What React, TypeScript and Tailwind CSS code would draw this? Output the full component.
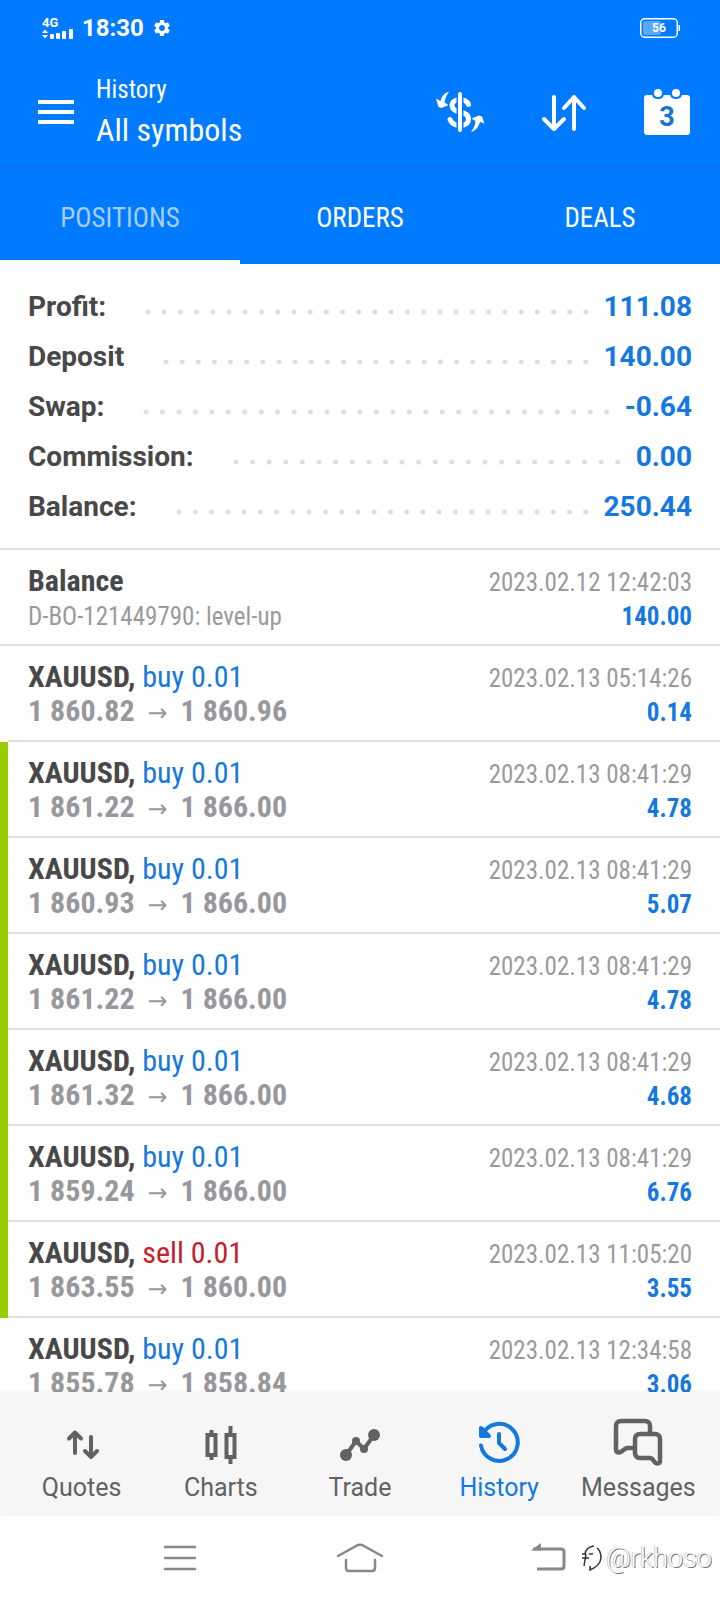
import { useState } from 'react';
import { MdSettings } from 'react-icons/md';
import clsx from 'clsx';

type Deal = {
  side: 'buy' | 'sell';
  open: string;
  close: string;
  time: string;
  profit: string;
  marked?: boolean;
};

const summary = [
  ['Profit:', '111.08'],
  ['Deposit', '140.00'],
  ['Swap:', '-0.64'],
  ['Commission:', '0.00'],
  ['Balance:', '250.44'],
];

const deals: Deal[] = [
  { side: 'buy', open: '1 860.82', close: '1 860.96', time: '2023.02.13 05:14:26', profit: '0.14' },
  { side: 'buy', open: '1 861.22', close: '1 866.00', time: '2023.02.13 08:41:29', profit: '4.78', marked: true },
  { side: 'buy', open: '1 860.93', close: '1 866.00', time: '2023.02.13 08:41:29', profit: '5.07', marked: true },
  { side: 'buy', open: '1 861.22', close: '1 866.00', time: '2023.02.13 08:41:29', profit: '4.78', marked: true },
  { side: 'buy', open: '1 861.32', close: '1 866.00', time: '2023.02.13 08:41:29', profit: '4.68', marked: true },
  { side: 'buy', open: '1 859.24', close: '1 866.00', time: '2023.02.13 08:41:29', profit: '6.76', marked: true },
  { side: 'sell', open: '1 863.55', close: '1 860.00', time: '2023.02.13 11:05:20', profit: '3.55', marked: true },
  { side: 'buy', open: '1 855.78', close: '1 858.84', time: '2023.02.13 12:34:58', profit: '3.06' },
];

const tabs = ['POSITIONS', 'ORDERS', 'DEALS'];

function SignalIcon() {
  return (
    <svg width="32" height="10" viewBox="0 0 32 10" fill="currentColor">
      <path d="M0 4L3 0.5L6 4ZM0 6L3 9.5L6 6Z" />
      <rect x="8" y="5" width="4" height="5" rx="1" />
      <rect x="14" y="4" width="4" height="6" rx="1" />
      <rect x="20" y="2" width="4" height="8" rx="1" />
      <rect x="27" y="0" width="4" height="10" rx="1" />
    </svg>
  );
}

function BatteryIcon() {
  return (
    <svg width="40" height="20" viewBox="0 0 40 20" role="img" aria-label="Battery 56%">
      <rect x="0.75" y="0.75" width="36.5" height="18.5" rx="4" fill="none" stroke="#fff" strokeWidth="1.5" />
      <rect x="3" y="3" width="18" height="14" rx="2" fill="#fff" fillOpacity="0.35" />
      <rect x="38.5" y="7" width="1.5" height="6" fill="#fff" />
      <text x="19" y="14" fill="#fff" fontSize="12" fontWeight="700" textAnchor="middle">56</text>
    </svg>
  );
}

function CurrencyIcon() {
  return (
    <svg width="50" height="46" viewBox="0 0 50 46" fill="none">
      <path
        d="M32.500 15.500C31 12 28 10.500 24 10.500C19.500 10.500 16 13 16 16.500C16 20.500 19 22 24 23C29.500 24 32.500 26 32.500 30C32.500 34 29 36.500 24 36.500C18.500 36.500 15.500 34 14 30.500"
        stroke="#fff"
        strokeWidth="5"
        strokeLinecap="round"
      />
      <path d="M24 5V41" stroke="#007aff" strokeWidth="7" />
      <path d="M24 5V41" stroke="#fff" strokeWidth="4" strokeLinecap="round" />
      <path d="M13 3C9 3.500 6 6.500 4.500 12L0 9.500L2.500 18L5.500 19L12.500 16L8.500 13.500C9 9.500 10.500 6 13 3Z" fill="#fff" />
      <path d="M35 43C39 42 42.500 38.500 44 33L48.500 34.500L46 27.500L43 26.500L35.500 29.500L39.500 32C39 36 37.500 40 35 43Z" fill="#fff" />
    </svg>
  );
}

function SortIcon() {
  return (
    <svg width="46" height="46" viewBox="0 0 46 46" fill="none" stroke="#fff" strokeWidth="4" strokeLinecap="round" strokeLinejoin="round">
      <path d="M12 8V40M2 30L12 40L22 30" />
      <path d="M32 40V8M22 19L32 8L42 19" />
    </svg>
  );
}

function CalendarIcon() {
  return (
    <svg width="46" height="46" viewBox="0 0 46 46">
      <rect y="6" width="46" height="40" rx="3" fill="#fff" />
      <rect x="8" y="-2" width="12" height="12" rx="5" fill="#007aff" />
      <rect x="26" y="-2" width="12" height="12" rx="5" fill="#007aff" />
      <circle cx="14" cy="4" r="4" fill="#fff" />
      <circle cx="32" cy="4" r="4" fill="#fff" />
      <text x="23" y="37" fill="#1a73d0" fontSize="27" fontWeight="700" textAnchor="middle">3</text>
    </svg>
  );
}

function QuotesIcon() {
  return (
    <svg width="48" height="48" viewBox="0 0 48 48" fill="none" stroke="currentColor" strokeWidth="4" strokeLinecap="round" strokeLinejoin="round">
      <path d="M17 35V15M11 20.500L17 14.500L23 20.500" />
      <path d="M33 19V39M27 33L33 39L39 33" />
    </svg>
  );
}

function ChartsIcon() {
  return (
    <svg width="48" height="48" viewBox="0 0 48 48" fill="none" stroke="currentColor" strokeWidth="4">
      <path d="M10.500 17H18.500V37H10.500ZM14.500 17V12M14.500 37V42" />
      <path d="M29.500 17H37.500V39H29.500ZM33.500 17V8M33.500 39V46" />
    </svg>
  );
}

function TradeIcon() {
  return (
    <svg width="48" height="48" viewBox="0 0 48 48" fill="currentColor">
      <path d="M10 37L20 23L28 31L38 17" fill="none" stroke="currentColor" strokeWidth="4" />
      <circle cx="10" cy="37" r="6" />
      <circle cx="20" cy="23" r="4" />
      <circle cx="28" cy="31" r="4" />
      <circle cx="38" cy="17" r="6" />
    </svg>
  );
}

function HistoryIcon() {
  return (
    <svg width="48" height="48" viewBox="0 0 48 48" fill="none" stroke="currentColor" strokeWidth="4" strokeLinecap="round" strokeLinejoin="round">
      <path d="M6 27.500A18.500 18.500 0 1 0 8 15.500" />
      <path d="M6 10V18H14Z" fill="currentColor" />
      <path d="M24 16V25L30 31" />
    </svg>
  );
}

function MessagesIcon() {
  return (
    <svg width="50" height="48" viewBox="0 0 50 48" fill="none" stroke="currentColor" strokeWidth="4.500" strokeLinejoin="round">
      <path d="M22 30H14C11 30 9.500 34.500 6 34.500C4 34.500 3 33 3 31V8C3 5 5 3 8 3H32C35 3 37 5 37 8V16" />
      <path d="M27 16H42C45 16 47 18 47 21V43C47 46 43 46 41.500 44C40 42 39.500 40 37 40H27C24 40 22 38 22 35V21C22 18 24 16 27 16Z" />
    </svg>
  );
}

const navItems = [
  { label: 'Quotes', Icon: QuotesIcon },
  { label: 'Charts', Icon: ChartsIcon },
  { label: 'Trade', Icon: TradeIcon },
  { label: 'History', Icon: HistoryIcon },
  { label: 'Messages', Icon: MessagesIcon },
];

function StatusBar() {
  return (
    <div className="flex h-14 items-center pl-[42px] pr-10">
      <div className="flex flex-col">
        <span className="text-[13px] leading-3 font-bold">4G</span>
        <SignalIcon />
      </div>
      <span className="ml-2 text-2xl font-bold">18:30</span>
      <MdSettings className="ml-2 size-5" />
      <div className="ml-auto">
        <BatteryIcon />
      </div>
    </div>
  );
}

function DealRow({ deal }: { deal: Deal }) {
  return (
    <li className={clsx('flex h-24 shrink-0 border-l-8', deal.marked ? 'border-[#99cc00]' : 'border-transparent')}>
      <div className="flex flex-1 justify-between border-b-2 border-[#e0e0e0] pt-[14px] pr-7 pl-5">
        <div className="text-[30px] leading-[34px] whitespace-nowrap">
          <p>
            <span className="font-bold text-[#48484a]">XAUUSD,</span>{' '}
            <span className={deal.side === 'buy' ? 'text-[#1478e0]' : 'text-[#c4202a]'}>{deal.side} 0.01</span>
          </p>
          <p className="font-bold text-[#98989c]">
            {deal.open} <span className="mx-1.5 font-['DejaVu_Sans',sans-serif] text-2xl leading-none font-normal">→</span> {deal.close}
          </p>
        </div>
        <div className="pt-[2px] text-right text-[25px] leading-[34px]">
          <p className="text-[#9a9a9c]">{deal.time}</p>
          <p className="font-bold text-[#1478e0]">{deal.profit}</p>
        </div>
      </div>
    </li>
  );
}

export default function App() {
  const [tab, setTab] = useState('POSITIONS');
  const [page, setPage] = useState('History');

  return (
    <div className="flex h-screen flex-col bg-white font-['Roboto_Condensed','Liberation_Sans_Narrow',Roboto,sans-serif]">
      <header className="shrink-0 bg-[#007aff] text-white">
        <div className="font-[Roboto,sans-serif]">
          <StatusBar />
        </div>
        <div className="flex h-28 items-center border-b-2 border-[#0a72ea] pt-[2px] pr-[30px] pl-[38px]">
          <button aria-label="Menu" className="flex w-9 flex-col gap-1.5">
            <span className="h-1 bg-white" />
            <span className="h-1 bg-white" />
            <span className="h-1 bg-white" />
          </button>
          <div className="ml-[22px] flex-1">
            <p className="text-[25px] leading-9">History</p>
            <h1 className="text-[32px] leading-[44px]">All symbols</h1>
          </div>
          <div className="flex gap-14 font-[Roboto,sans-serif]">
            <button aria-label="Currency"><CurrencyIcon /></button>
            <button aria-label="Sort"><SortIcon /></button>
            <button aria-label="Calendar"><CalendarIcon /></button>
          </div>
        </div>
        <div role="tablist" className="grid grid-cols-3">
          {tabs.map((name) => (
            <button
              key={name}
              role="tab"
              aria-selected={tab === name}
              onClick={() => setTab(name)}
              className={clsx(
                'h-24 border-b-4 pt-2 text-[27px]',
                tab === name ? 'border-white text-[#a6cfff]' : 'border-transparent text-white'
              )}
            >
              {name}
            </button>
          ))}
        </div>
      </header>

      <main className="flex min-h-0 flex-1 flex-col overflow-hidden">
        <dl className="shrink-0 border-b-2 border-[#e0e0e0] px-7 pt-[18px] pb-4 font-[Roboto,sans-serif] text-[28px] leading-[50px] font-bold">
          {summary.map(([label, value]) => (
            <div key={label} className="flex items-center">
              <dt className="text-[#48484a]">{label}</dt>
              {/* dotted leader, only whole dots */}
              <span className="mt-[10px] mr-[10px] ml-[34px] h-[6px] flex-1 bg-[radial-gradient(circle,#dedee0_2px,transparent_3px)] bg-[length:16px_6px] [background-repeat:space_no-repeat]" />
              <dd className="text-[#1478e0]">{value}</dd>
            </div>
          ))}
        </dl>

        <ul>
          <li className="flex h-24 justify-between border-b-2 border-[#e0e0e0] px-7 pt-[14px]">
            <div>
              <p className="text-[30px] leading-[34px] font-bold text-[#48484a]">Balance</p>
              <p className="text-[25px] leading-[38px] text-[#9a9a9c]">D-BO-121449790: level-up</p>
            </div>
            <div className="pt-[2px] text-right text-[25px] leading-[34px]">
              <p className="text-[#9a9a9c]">2023.02.12 12:42:03</p>
              <p className="font-bold text-[#1478e0]">140.00</p>
            </div>
          </li>
          {deals.map((deal, i) => (
            <DealRow key={i} deal={deal} />
          ))}
        </ul>
      </main>

      <nav className="grid h-[124px] shrink-0 grid-cols-5 bg-[#f6f6f6] px-3 font-[Roboto,sans-serif] shadow-[0_-1px_3px_rgba(0,0,0,0.05)]">
        {navItems.map(({ label, Icon }) => (
          <button
            key={label}
            onClick={() => setPage(label)}
            className={clsx('flex flex-col items-center gap-1 pt-[26px] text-[25px] leading-9', page === label ? 'text-[#1478e0]' : 'text-[#626262]')}
          >
            <Icon />
            {label}
          </button>
        ))}
      </nav>

      <div className="relative grid h-[84px] shrink-0 grid-cols-3 place-items-center px-[90px]">
        <button aria-label="Recent apps">
          <svg width="34" height="30" viewBox="0 0 34 30" fill="none" stroke="#888" strokeWidth="2.500" strokeLinecap="round">
            <path d="M2 4H32M2 15H32M2 26H32" />
          </svg>
        </button>
        <button aria-label="Home">
          <svg width="48" height="32" viewBox="0 0 48 32" fill="none" stroke="#888" strokeWidth="2.500" strokeLinecap="round">
            <path d="M2 14L20 4Q24 1.500 28 4L46 14" />
            <path d="M10 18V26Q10 29 13 29H36Q39 29 39 26V18" />
          </svg>
        </button>
        <button aria-label="Back">
          <svg width="54" height="30" viewBox="0 0 54 30" fill="none" stroke="#888" strokeWidth="3">
            <path d="M20 6H48Q51 6 51 9V23Q51 26 48 26H24" />
            <path d="M18 7.500L28 0V7.500Z" fill="#888" stroke="none" />
          </svg>
        </button>
        <div className="absolute right-2 flex items-center gap-1 font-[Roboto,sans-serif] text-[27px] font-light text-white [text-shadow:1px_1px_0_#777,-1px_0_0_#ccc]">
          <svg width="22" height="28" viewBox="0 0 22 28" fill="none" stroke="#333" strokeWidth="1.500">
            <path d="M2 10H5Q6 3 14 2M6 10L4 22M2 14H9M9 10H13" />
            <path d="M17 4Q21 7 21 14Q20 22 10 26L10 22" />
          </svg>
          @rkhoso
        </div>
      </div>
    </div>
  );
}
